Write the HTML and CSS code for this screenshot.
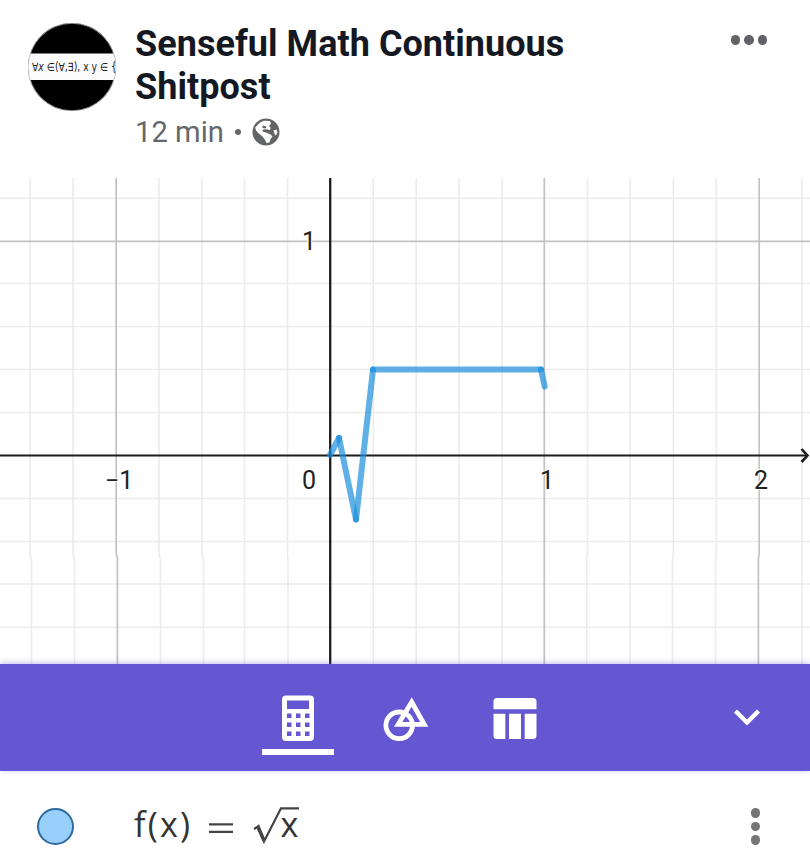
FILE: index.html
```html
<!DOCTYPE html>
<html lang="en">
<head>
    <meta charset="UTF-8">
    <title>Senseful Math Continuous Shitpost</title>
    <link rel="stylesheet" href="styles.css">
</head>
<body>
    <div class="post">
        <div class="post_head">
            <svg class="face" viewBox="0 0 90 90">
                <clipPath id="face_clip"><circle cx="45" cy="45" r="44"/></clipPath>
                <g clip-path="url(#face_clip)">
                    <rect width="90" height="90" fill="#000"/>
                    <rect y="31.5" width="90" height="26.5" fill="#fbfbfb"/>
                    <text class="face_txt" x="5" y="48.5" textLength="85" lengthAdjust="spacingAndGlyphs">∀<tspan font-style="italic">x</tspan> ∈(∀,∃), x y ∈ {</text>
                </g>
                <circle cx="45" cy="45" r="43.7" fill="none" stroke="#ccc" stroke-width=".7"/>
            </svg>
            <div class="post_info">
                <h1>Senseful Math Continuous<br>Shitpost</h1>
                <div class="post_time">
                    <span>12 min</span>
                    <i class="sep"></i>
                    <svg class="globe" viewBox="0 0 28 28">
                        <circle cx="14" cy="14" r="13.5" fill="#636466"/>
                        <path fill="#fff" d="M8 4.5 12 2.7 18 3 19 5.5 17 8 18.5 9.5 18 12 14.5 11.3 11 11.5 10.5 13.5 14 14.5 18.5 16.5 20.5 18.5 18.5 21 17.5 24.5 14.5 25 12.8 21.5 10.5 18.5 7 15.8 4 12.5 3.2 9.5z"/>
                        <path fill="#636466" d="M10.5 7.5 14.5 8.5 13.5 10.5 10.5 10z"/>
                        <path fill="#fff" d="M21.5 12.5 24.5 11.5 25.3 14.5 24 17.5 22.5 16z"/>
                    </svg>
                </div>
            </div>
            <div class="more"><i></i><i></i><i></i></div>
        </div>

        <svg class="chart" viewBox="0 178 810 486">
            <!-- minor grid -->
            <g class="minor">
                <path d="M0 198.3H810M0 283.5H810M0 326.5H810M0 369.5H810M0 412.5H810M0 498.5H810M0 541.5H810M0 584H810M0 627.3H810"/>
                <path d="M30 178V555L31.5 559V664M73 178V555L74.5 559V664M159 178V555L160.5 559V664M202 178V555L203.5 559V664M244.5 178V664M287.5 178V555L288 559V664M373.3 178V664M416.2 178V664M459 178V664M502 178V664M587.5 178V555L586.7 559V664M630 178V664M673.3 178V555L672.5 559V664M716.3 178V555L715.5 559V664M802 178V664"/>
            </g>
            <!-- major grid -->
            <g class="major">
                <path d="M0 241.3H810M116.2 178V554L117.4 558V664M544.3 178V664M759.2 178V554L758.4 558V664"/>
            </g>
            <path class="axis" d="M0 455.6H807"/>
            <path class="axis axis_y" d="M330.2 178V664"/>
            <path class="axis arrow" d="M801.5 449 807.5 455.6 801.5 462"/>
            <g class="nums">
                <text x="302" y="250">1</text>
                <text x="105" y="489">−1</text>
                <text x="302" y="489">0</text>
                <text x="540" y="489">1</text>
                <text x="754" y="489">2</text>
            </g>
            <g class="curve">
                <path d="M330 455 339 438"/>
                <path d="M339 438 356 519.5"/>
                <path d="M356 519.5 373 369.5"/>
                <path d="M373 369.5H541"/>
                <path d="M541 369.5 544.7 386.5"/>
            </g>
        </svg>

        <div class="tabs">
            <div class="tab active">
                <svg width="34" height="48" viewBox="0 0 34 48">
                    <path fill="#fff" fill-rule="evenodd" d="M5 1.5H29A4 4 0 0 1 33 5.5V43A4 4 0 0 1 29 47H5A4 4 0 0 1 1 43V5.5A4 4 0 0 1 5 1.5zM6 6.500V15H28V6.500zM6 19.500V24H10.500V19.500zM15 19.500V24H19.500V19.500zM24 19.500V24H28.500V19.500zM6 28.500V33H10.500V28.500zM15 28.500V33H19.500V28.500zM24 28.500V33H28.500V28.500zM6 37.500V42H10.500V37.500zM15 37.500V42H19.500V37.500zM24 37.500V42H28.500V37.500z"/>
                </svg>
            </div>
            <div class="tab">
                <svg width="46" height="48" viewBox="0 0 46 48">
                    <g fill="none" stroke="#fff" stroke-width="4.8">
                        <circle cx="16.2" cy="31.3" r="13.3"/>
                        <path d="M28.7 8 41.2 30.3H15.2z"/>
                    </g>
                </svg>
            </div>
            <div class="tab">
                <svg width="44" height="48" viewBox="0 0 44 48">
                    <path fill="#fff" d="M4 4H40Q43.5 4 43.5 7.5V15.3H.5V7.5Q.5 4 4 4zM.5 19.8H12.3V45H4Q.5 45 .5 41.5zM16 19.8H28V45H16zM31.7 19.8H43.5V41.5Q43.5 45 40 45H31.7z"/>
                </svg>
            </div>
            <svg class="down" width="28" height="18" viewBox="0 0 28 18">
                <path fill="none" stroke="#fff" stroke-width="4.4" d="M2.5 3 14 14.5 25.5 3"/>
            </svg>
        </div>

        <div class="func">
            <i class="dot"></i>
            <svg class="formula" width="180" height="50" viewBox="0 0 180 50">
                <text x="4" y="37" textLength="56">f(x)</text>
                <path class="equal" d="M79 24.3H103M79 31.8H103"/>
                <path class="root" d="M124 29 128.5 26 134 41.5 151 8.3H169"/>
                <path class="root_bold" d="M128 27 134 40.5"/>
                <text x="150.5" y="37">x</text>
            </svg>
            <div class="more more_v"><i></i><i></i><i></i></div>
        </div>
    </div>
</body>
</html>
```

FILE: styles.css
```css
*{
    margin: 0;
    padding: 0;
    box-sizing:border-box;
}
body{
    background:#fff;
    font-family:Roboto,"Liberation Sans",sans-serif;
    overflow:hidden;
}
svg{
    display:block;
}
.post{
    width:810px;
    height:862px;
    display:flex;
    flex-direction:column;
}
.post_head{
    height:178px;
    display:flex;
    align-items:flex-start;
    padding:22px 43px 0 27px;
}
.face{
    width:90px;
    height:90px;
}
.face_txt{
    font:11.5px "DejaVu Sans",sans-serif;
    fill:#222;
}
.post_info{
    flex:1;
    padding-left:18px;
}
.post_info h1{
    font-size:36px;
    line-height:43px;
    font-weight:bold;
    color:#141823;
    letter-spacing:.04px;
    padding-top:1px;
}
.post_time{
    display:flex;
    align-items:center;
    height:46px;
    font-size:29.2px;
    color:#65676b;
}
.sep{
    width:6px;
    height:6px;
    border-radius:50%;
    background:#65676b;
    margin:0 11px;
}
.globe{
    width:28px;
    height:28px;
}
.more{
    display:flex;
    gap:4px;
    padding-top:13px;
}
.more i{
    width:9.5px;
    height:9.5px;
    border-radius:50%;
    background:#626366;
}
.chart{
    width:810px;
    height:486px;
}
.chart path{
    fill:none;
}
.minor{
    stroke:#ececec;
    stroke-width:1.6;
}
.major{
    stroke:#c2c2c2;
    stroke-width:1.7;
}
.axis{
    stroke:#1c1c1c;
    stroke-width:2;
}
.axis_y{
    stroke-width:2.3;
}
.arrow{
    stroke-width:2.6;
}
.nums{
    font-size:25px;
    fill:#222;
    stroke:#fff;
    stroke-width:2px;
    paint-order:stroke;
}
.curve path{
    stroke:#1b8fdc;
    stroke-opacity:.7;
    stroke-width:6;
    stroke-linecap:round;
}
.tabs{
    height:107px;
    background:#6557d2;
    box-shadow:0 -1px 6px rgba(101,87,210,.4);
    display:flex;
    align-items:flex-start;
    padding:30px 49px 0 262px;
    gap:36px;
}
.tab{
    width:72px;
    height:61px;
    display:flex;
    justify-content:center;
}
.tab:nth-child(3){
    padding-left:1px;
}
.active{
    border-bottom:6px solid #fff;
}
.down{
    margin:14px 0 0 auto;
}
.func{
    height:91px;
    display:flex;
    align-items:flex-start;
    padding:37px 50px 0 37px;
}
.dot{
    width:37px;
    height:37px;
    border-radius:50%;
    border:2.5px solid #2f6a9e;
    background:#99d0fb;
}
.formula{
    margin-left:56px;
    margin-top:-8px;
}
.formula text{
    font:34px "Open Sans",sans-serif;
    fill:#333;
}
.formula path{
    fill:none;
    stroke:#444;
    stroke-width:2.2;
}
.formula .root_bold{
    stroke-width:3.5;
}
.more_v{
    flex-direction:column;
    margin-left:auto;
    padding-top:0;
}
.more_v i{
    background:#757575;
}
```
